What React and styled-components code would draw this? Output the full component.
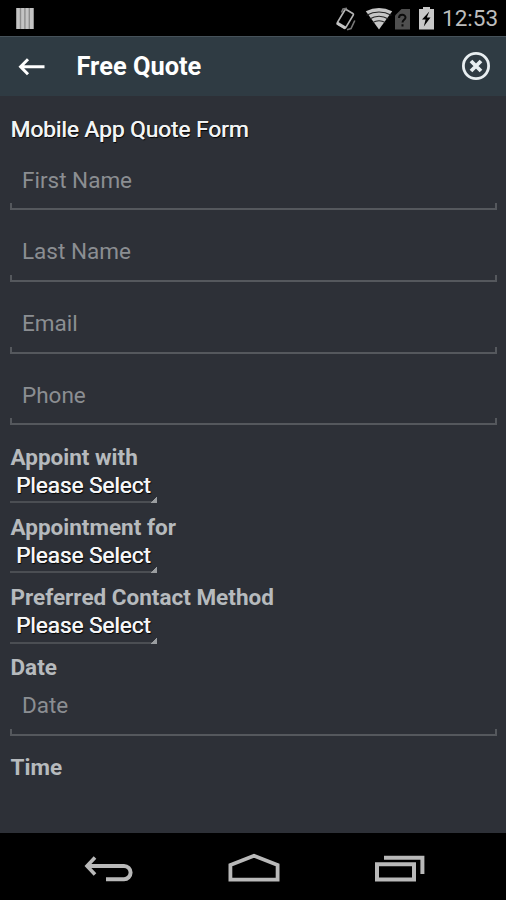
import styled, { createGlobalStyle } from "styled-components";

const fields = ["First Name", "Last Name", "Email", "Phone"];
const selects = ["Appoint with", "Appointment for", "Preferred Contact Method"];

const App = () => {
  return (
    <>
      <GlobalStyle />
      <Screen>
        <StatusBar>
          <Barcode viewBox="0 0 18 21" width={18} height={21}>
            <rect width="18" height="21" fill="#8e8e8e" />
            <path d="M2.3 0v21M6.7 0v21M11.1 0v21M15.5 0v21" stroke="#c4c4c4" strokeWidth="3" />
          </Barcode>
          <StatusIcons />
          <Clock>12:53</Clock>
        </StatusBar>

        <Header>
          <svg width="28" height="20" viewBox="0 0 28 20" fill="none" stroke="#fff" strokeWidth="3">
            <path d="M10 2.2 2.6 9.7l7.4 7.5M2.8 9.7h23.7" />
          </svg>
          <HeaderTitle>Free Quote</HeaderTitle>
          <svg width="30" height="30" viewBox="0 0 30 30" fill="none" stroke="#e8eef1">
            <circle cx="15" cy="14" r="12.6" strokeWidth="2.8" />
            <path d="m10 9 10 10m0-10-10 10" strokeWidth="3.8" />
          </svg>
        </Header>

        <Form>
          <FormTitle>Mobile App Quote Form</FormTitle>
          {fields.map((name) => <Field key={name}>{name}</Field>)}
          <Groups>
            {selects.map((label) => (
              <Group key={label}>
                <Label>{label}</Label>
                <Select>Please Select</Select>
              </Group>
            ))}
            <DateLabel>Date</DateLabel>
            <Field compact>Date</Field>
            <TimeLabel>Time</TimeLabel>
          </Groups>
        </Form>

        <NavBar>
          <svg width="50" height="30" viewBox="0 0 50 30" fill="none" stroke="#b9b9b9" strokeWidth="4">
            <path d="M12 4.5 4 13l8 8.5" strokeWidth="3.6" />
            <path d="M4 13h37a6.6 6.6 0 0 1 0 13.2H23" />
          </svg>
          <svg width="54" height="30" viewBox="0 0 54 30" fill="none" stroke="#b9b9b9" strokeWidth="3.8">
            <path d="M3.4 26.6V12L27 2.8 50.6 12v14.6z" />
          </svg>
          <svg width="52" height="30" viewBox="0 0 52 30" fill="none" stroke="#b9b9b9" strokeWidth="4">
            <path d="M3 11.2h37v15.4H3zM10 4.8h38.4V21" />
          </svg>
        </NavBar>
      </Screen>
    </>
  );
};

const StatusIcons = () => (
  <svg width="102" height="26" viewBox="334 4 102 26">
    {/* rotating phone */}
    <g transform="rotate(31 345.5 17.5)" fill="none">
      <rect x="340.6" y="9.4" width="9.8" height="17" rx="1.2" stroke="#b4b4b4" strokeWidth="1.7" />
      <path d="M340.6 25.6h9.8" stroke="#c4c4c4" strokeWidth="3" />
    </g>
    <path d="M341.5 11.5 343 8l4-.6M354.8 19.5l-3.8 8-4 1.3" fill="none" stroke="#777" strokeWidth="1.6" />
    {/* wifi */}
    <path d="M365.8 10.2q13.2-6.4 26.4 0L379 28.5z" fill="#c6c6c6" />
    <path d="M366.5 14.2q12.5-6.4 25 0M369.5 17.9q9.5-5.2 19 0M372.5 21.6q6.5-3.8 13 0" fill="none" stroke="#222" strokeWidth="1.1" />
    {/* sim */}
    <path d="M395 14.5 401.5 8h8.5v20.5h-15z" fill="#4f4f4f" />
    <path d="M399 17c0-4.2 6.5-4 6.5-.6 0 2.4-3 2.4-3 5.2M402.5 23.2v2.3" fill="none" stroke="#0c0c0c" strokeWidth="2" />
    {/* battery */}
    <path d="M419 8h4V6h7v2h4v20.5h-15z" fill="#c8c8c8" />
    <path d="m429.3 10.5-7.3 8h3.6l-1.8 7 6.7-9h-3.7z" fill="#000" />
  </svg>
);

const GlobalStyle = createGlobalStyle`
  body {
    margin: 0;
    background-color: #000;
    font-family: Roboto, "Liberation Sans", sans-serif;
    font-size: 22.5px;
    line-height: 28px;
    overflow: hidden;
  }

  * {
    box-sizing: border-box;
  }
`;

const Screen = styled.div`
  display: flex;
  flex-direction: column;
  width: 506px;
  height: 900px;
`;

const StatusBar = styled.div`
  display: flex;
  align-items: center;
  height: 36px;
  padding: 0 8px 0 16px;
  background-color: #000;
`;

const Barcode = styled.svg`
  margin-right: auto;
`;

const Clock = styled.span`
  width: 56px;
  margin-left: 6px;
  color: #bdbdbd;
  white-space: nowrap;
`;

const Header = styled.div`
  display: flex;
  align-items: center;
  height: 60px;
  padding: 0 15px 0 18px;
  border-top: 1px solid #46525a;
  background-color: #2f3b43;
`;

const HeaderTitle = styled.h1`
  margin: 0 auto 0 30.5px;
  padding-bottom: 2px;
  color: #fff;
  font-size: 25.4px;
  font-weight: 700;
`;

const Form = styled.div`
  flex: 1;
  padding: 0 9px 0 10px;
  background-color: #2d3037;
  overflow: hidden;
`;

const FormTitle = styled.h2`
  height: 42.25px;
  margin: 0;
  padding: 23.5px 0 0 0.5px;
  color: #f2f4f5;
  font-size: 22.6px;
  font-weight: 400;
  line-height: 19px;
  text-shadow: 0.4px 0 0 #f2f4f5, 1px 1px 1px #000;
`;

const Field = styled.div.withConfig({ shouldForwardProp: (p) => p !== "compact" })`
  height: ${({ compact }) => compact ? "55.5px" : "71.75px"};
  padding: ${({ compact }) => compact ? "10.4px" : "27.3px"} 12px 0;
  color: #8b8e92;
  background:
    linear-gradient(#55585d, #55585d) left bottom / 100% 2px no-repeat,
    linear-gradient(#55585d, #55585d) left bottom / 2px 7px no-repeat,
    linear-gradient(#55585d, #55585d) right bottom / 2px 7px no-repeat;
`;

const Groups = styled.div`
  padding-top: 7.5px;
`;

const Group = styled.div`
  height: 70.3px;
  padding-top: 9.8px;
`;

const Label = styled.div`
  padding-left: 0.5px;
  color: #b6babd;
  font-weight: 700;
`;

const DateLabel = styled(Label)`
  padding-top: 9.3px;
`;

const TimeLabel = styled(Label)`
  padding-top: 16.4px;
`;

const Select = styled.div`
  width: 147px;
  height: 32.5px;
  padding: 0.2px 0 0 6px;
  color: #f5f6f7;
  text-shadow: 0.4px 0 0 #f5f6f7, 1px 1px 1px #000;
  white-space: nowrap;
  background:
    linear-gradient(135deg, transparent 50%, #9a9da0 50%) right bottom / 6px 7px no-repeat,
    linear-gradient(#4b4e53, #4b4e53) left bottom / 100% 2px no-repeat;
`;

const NavBar = styled.div`
  display: flex;
  justify-content: space-between;
  height: 67px;
  padding: 20px 80px 0 83px;
  background-color: #000;
`;

export default App;
